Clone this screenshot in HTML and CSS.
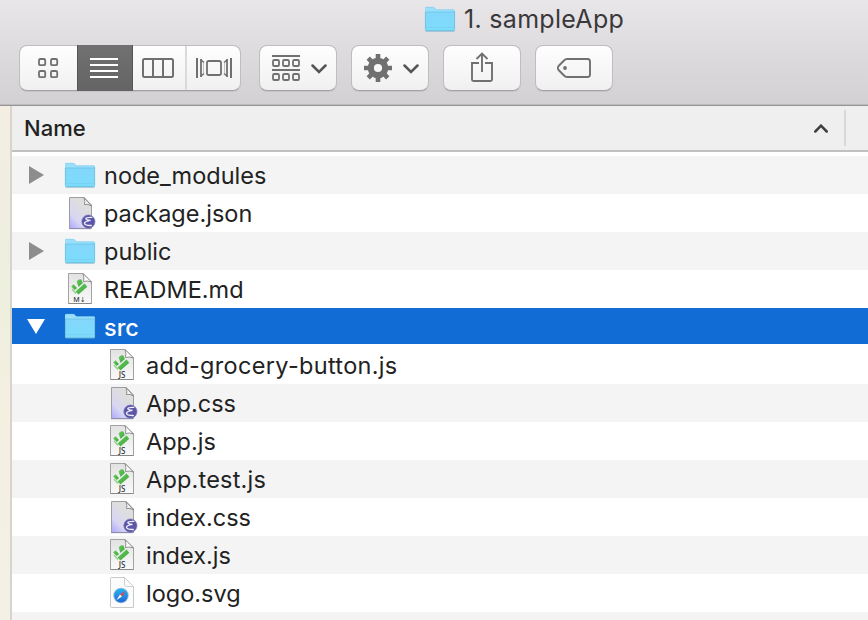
FILE: index.html
```html
<!DOCTYPE html>
<html lang="en">
<head>
<meta charset="utf-8">
<title>1. sampleApp</title>
<link rel="stylesheet" href="styles.css">
</head>
<body>
<svg class="defs" width="0" height="0" aria-hidden="true">
  <defs>
    <linearGradient id="gFolder" x1="0" y1="0" x2="0" y2="1"><stop offset="0" stop-color="#83d7fa"/><stop offset="1" stop-color="#7ddcfb"/></linearGradient>
    <linearGradient id="gPage" x1="0" y1="0" x2="0" y2="1"><stop offset="0" stop-color="#e2e2e2"/><stop offset="1" stop-color="#fafafa"/></linearGradient>
    <linearGradient id="gLilac" x1="0" y1="1" x2=".55" y2=".25"><stop offset="0" stop-color="#aaa6ff"/><stop offset=".45" stop-color="#d8d6f2"/><stop offset="1" stop-color="#dedede"/></linearGradient>
    <linearGradient id="gGreen" x1="0" y1="0" x2="1" y2="1"><stop offset="0" stop-color="#6cc866"/><stop offset="1" stop-color="#37a832"/></linearGradient>
    <linearGradient id="gBlue" x1="0" y1="0" x2="0" y2="1"><stop offset="0" stop-color="#24b5f5"/><stop offset="1" stop-color="#2168d4"/></linearGradient>
  </defs>
  <symbol id="folder" viewBox="0 0 32 28">
    <path d="M1 25V3.2Q1 2 2.2 2H9.3Q10.2 2 10.8 2.8L12.2 4.5H29.8Q31 4.5 31 5.7V25Z" fill="#9adffb"/>
    <path d="M1 7H31V24.5Q31 26 29.800 26H2.200Q1 26 1 24.500Z" fill="url(#gFolder)"/>
    <path d="M1 7H31" stroke="#6dc4e6" stroke-width=".8"/>
    <path d="M1.500 22.500H30.500" stroke="#74cdec" stroke-width=".6"/>
    <path d="M1.400 7V24.500M30.600 6V24.500" stroke="#68bde0" stroke-width=".7"/>
    <path d="M1.500 3.200Q1.500 2.300 2.300 2.300H9.300Q10 2.300 10.600 3.100L12 4.800H30" fill="none" stroke="#80cceb" stroke-width=".6"/>
    <path d="M1.500 26H30.500" stroke="#66acc8" stroke-width="1"/>
  </symbol>
  <symbol id="emacs" viewBox="0 0 32 34">
    <path d="M5.500 1.500H20L27.500 9V32.500H5.500Z" fill="url(#gLilac)" stroke="#9d9da2"/>
    <path d="M20 1.500Q21.500 6 20.500 8.500Q24 7.500 27.500 10Z" fill="#f7f7f7" stroke="#777" stroke-width=".8"/>
    <path d="M5 32.700H27" stroke="#8985a9" stroke-width=".8"/>
    <circle cx="24.400" cy="25.600" r="6.600" fill="#5b56a9" stroke="#7976b5" stroke-width=".7"/>
    <path d="M27.800 21.300Q22 21.100 21.800 22.700Q22 24 26.500 24.300Q20.300 25.400 20.500 27.300Q21 29.600 27.300 29.500" fill="none" stroke="#f0effa" stroke-width="1.300" stroke-linecap="round"/>
  </symbol>
  <symbol id="page" viewBox="0 0 32 34">
    <path d="M4.500 1.500H19L27.500 10V31.500H4.500Z" fill="url(#gPage)" stroke="#a2a2a2"/>
    <path d="M19 1.500Q20.500 6 19.500 9.500Q23 8.300 27.500 10Z" fill="#fff" stroke="#777" stroke-width=".8"/>
    <path d="M4.500 31.500H27.500" stroke="#888"/>
    <g fill="url(#gGreen)"><path d="M7.200 14.500L9.500 12.300L13 16L10.800 18Z"/><path d="M12.700 9.500Q14.500 6.500 17.400 7.500L18.800 11L14.500 15Z"/><path d="M11.500 19.500L20.500 11.500L23.300 14.800L14.500 22.500Z"/></g>
    <path d="M8 17L12 21.500" stroke="#8bd086" stroke-width="1.200"/>
  </symbol>
  <symbol id="safari" viewBox="0 0 32 34">
    <path d="M5.500 1.500H18.500L27.500 10.500V31.500H5.500Q4.500 31.500 4.500 30.500V2.500Q4.500 1.500 5.500 1.500Z" fill="#fcfcfc" stroke="#c9c9c9"/>
    <path d="M18.500 1.500V8.500Q18.500 10.500 20.500 10.500H27.500Z" fill="#fff" stroke="#c4c4c4" stroke-width=".8"/>
    <circle cx="15" cy="19.500" r="7.800" fill="#a9c5d8"/><circle cx="15" cy="19.500" r="6.900" fill="url(#gBlue)"/>
    <path d="M19.500 15L14 18.500L16 20.500Z" fill="#ee4036"/><path d="M10.500 24L14 18.500L16 20.500Z" fill="#fff"/>
  </symbol>
</svg>

<header class="toolbar">
  <div class="title"><svg class="folder-icon" width="32" height="28"><use href="#folder"/></svg><h1>1. sampleApp</h1></div>
  <div class="controls">
    <div class="segments">
      <button class="seg seg-icons" aria-label="Icons"><svg width="22" height="22" viewBox="0 0 22 22" fill="none" stroke="#707070" stroke-width="1.800"><rect x="2" y="2" width="6.200" height="6.200" rx="1.300"/><rect x="14" y="2" width="6.200" height="6.200" rx="1.300"/><rect x="2" y="14" width="6.200" height="6.200" rx="1.300"/><rect x="14" y="14" width="6.200" height="6.200" rx="1.300"/></svg></button>
      <button class="seg seg-list" aria-label="List"><svg width="28" height="20" viewBox="0 0 28 20" stroke="#fff" stroke-width="2"><path d="M0 1H28M0 7H28M0 13H28M0 19H28"/></svg></button>
      <button class="seg seg-columns" aria-label="Columns"><svg width="32" height="20" viewBox="0 0 32 20" fill="none" stroke="#707070" stroke-width="2"><rect x="1" y="1" width="30" height="18" rx="1.500"/><path d="M11 1V19M21 1V19"/></svg></button>
      <button class="seg seg-cover" aria-label="Cover Flow"><svg width="36" height="20" viewBox="0 0 36 20" fill="none" stroke="#707070" stroke-width="2"><path d="M1 0V20M35 0V20"/><path d="M5 1V19M31 1V19" stroke-width="1.800"/><path d="M4.500 1.500L8 4.500M4.500 18.500L8 15.500M31.500 1.500L28 4.500M31.500 18.500L28 15.500" stroke-width="1.500"/><path d="M7.500 5V15M28.500 5V15" stroke-width=".7" stroke="#aaa"/><rect x="11" y="3" width="14" height="14" rx="1.800" stroke-width="1.800"/></svg></button>
    </div>
    <button class="btn" aria-label="Arrange"><svg width="28" height="26" viewBox="0 0 28 26" fill="none" stroke="#707070" stroke-width="1.800"><path d="M0 1H28M0 15H28"/><rect x="1" y="5" width="6" height="6" rx="1.300"/><rect x="11" y="5" width="6" height="6" rx="1.300"/><rect x="21" y="5" width="6" height="6" rx="1.300"/><rect x="1" y="19" width="6" height="6" rx="1.300"/><rect x="11" y="19" width="6" height="6" rx="1.300"/><rect x="21" y="19" width="6" height="6" rx="1.300"/></svg><svg class="chev" width="16" height="10" viewBox="0 0 16 10"><path d="M1.500 1.500L8 8L14.500 1.500" fill="none" stroke="#555" stroke-width="2.500" stroke-linecap="round"/></svg></button>
    <button class="btn" aria-label="Action"><svg width="28" height="28" viewBox="0 0 28 28"><circle cx="14" cy="14" r="7.200" fill="none" stroke="#707070" stroke-width="6.200"/><g stroke="#707070" stroke-width="4.600"><path d="M14 0V6M14 22V28M0 14H6M22 14H28M4.200 4.200L8.500 8.500M19.500 19.500L23.800 23.800M4.200 23.800L8.500 19.500M19.500 8.500L23.800 4.200"/></g></svg><svg class="chev" width="16" height="10" viewBox="0 0 16 10"><path d="M1.500 1.500L8 8L14.500 1.500" fill="none" stroke="#555" stroke-width="2.500" stroke-linecap="round"/></svg></button>
    <button class="btn btn-share" aria-label="Share"><svg width="22" height="30" viewBox="0 0 22 30" fill="none" stroke="#707070" stroke-width="1.900"><path d="M8 11H1V27.500Q1 29 2.500 29H19.500Q21 29 21 27.500V11H14M11 20V1.500M5.500 7L11 1.500L16.500 7"/></svg></button>
    <button class="btn btn-tag" aria-label="Tags"><svg width="34" height="20" viewBox="0 0 34 20"><path d="M10 1H30.500Q33 1 33 3.500V16.500Q33 19 30.500 19H10Q8.500 19 7 17.500L1.600 12Q0 10 1.600 8L7 2.500Q8.500 1 10 1Z" fill="none" stroke="#707070" stroke-width="1.900"/><circle cx="8" cy="10" r="1.900" fill="#707070"/></svg></button>
  </div>
</header>

<main class="content">
  <div class="edge"></div>
  <section class="list">
    <div class="columns"><span class="name">Name</span><svg class="sort" width="14" height="9" viewBox="0 0 14 9"><path d="M1.300 7.500L7 1.700L12.700 7.500" fill="none" stroke="#3f3f3f" stroke-width="2.500" stroke-linecap="round"/></svg><span class="divider"></span></div>
    <ul>
      <li class="row"><svg class="tri" width="16" height="18"><path d="M1 0L16 9L1 18Z" fill="#8d8d8d"/></svg><svg class="folder-icon" width="32" height="28"><use href="#folder"/></svg><span>node_modules</span></li>
      <li class="row file"><svg class="doc" width="32" height="34"><use href="#emacs"/></svg><span>package.json</span></li>
      <li class="row"><svg class="tri" width="16" height="18"><path d="M1 0L16 9L1 18Z" fill="#8d8d8d"/></svg><svg class="folder-icon" width="32" height="28"><use href="#folder"/></svg><span>public</span></li>
      <li class="row file"><svg class="doc" width="32" height="34"><use href="#page"/><text x="15.500" y="29.500" class="kind">M↓</text></svg><span>README.md</span></li>
      <li class="row selected"><svg class="tri" width="18" height="16"><path d="M0 1H18L9 16Z" fill="#fff"/></svg><svg class="folder-icon" width="32" height="28"><use href="#folder"/></svg><span>src</span></li>
      <li class="row file child"><svg class="doc" width="32" height="34"><use href="#page"/><text x="16" y="29.500" class="kind js">JS</text></svg><span class="long">add-grocery-button.js</span></li>
      <li class="row file child"><svg class="doc" width="32" height="34"><use href="#emacs"/></svg><span>App.css</span></li>
      <li class="row file child"><svg class="doc" width="32" height="34"><use href="#page"/><text x="16" y="29.500" class="kind js">JS</text></svg><span>App.js</span></li>
      <li class="row file child"><svg class="doc" width="32" height="34"><use href="#page"/><text x="16" y="29.500" class="kind js">JS</text></svg><span class="mid">App.test.js</span></li>
      <li class="row file child"><svg class="doc" width="32" height="34"><use href="#emacs"/></svg><span>index.css</span></li>
      <li class="row file child"><svg class="doc" width="32" height="34"><use href="#page"/><text x="16" y="29.500" class="kind js">JS</text></svg><span>index.js</span></li>
      <li class="row file child"><svg class="doc" width="32" height="34"><use href="#safari"/></svg><span>logo.svg</span></li>
      <li class="row"></li>
    </ul>
  </section>
</main>
</body>
</html>
```
FILE: styles.css
```css
* { box-sizing: border-box; }
body {
  margin: 0;
  width: 868px;
  height: 620px;
  overflow: hidden;
  background: #fff;
  color: #222;
  font-family: Inter, "Liberation Sans", sans-serif;
  font-size: 23.5px;
}
svg { display: block; flex: none; }
.defs { position: absolute; }
.toolbar {
  height: 106px;
  background: linear-gradient(#e9e6e9, #d2d0d2);
  border-bottom: 1px solid #969496;
  box-shadow: inset 0 -1px #bcbabc;
}
.title { display: flex; align-items: center; height: 38px; padding-left: 424px; }
.title svg { margin-top: -1px; }
h1 { margin: 0 0 0 8px; font-size: 25px; font-weight: 400; color: #3a383a; white-space: nowrap; letter-spacing: .3px; }
.controls { display: flex; gap: 14px; padding: 7px 0 0 19px; }
button { margin: 0; padding: 0; display: flex; align-items: center; border: 0; background: none; }
.segments, .btn {
  height: 46px;
  border: 1px solid #bfbdbf;
  border-bottom-color: #a3a1a3;
  border-radius: 8px;
  background: linear-gradient(#fefefe, #f0f0f0);
  box-shadow: 0 1px #c6c4c6;
}
.segments { display: flex; width: 222px; margin-right: 4px; }
.seg { height: 44px; justify-content: center; }
.seg-icons { width: 57px; padding-right: 1px; }
.seg-list { width: 56px; height: 46px; margin-top: -1px; padding-right: 2px; background: linear-gradient(#717171, #646464); border: 1px solid #555; border-width: 0 1px; }
.seg-columns { width: 54px; padding-right: 2px; border-right: 2px solid #dadada; }
.seg-cover { width: 53px; }
.btn { width: 78px; padding-left: 12px; }
.chev { margin-left: 11px; margin-top: 1px; }
.btn-share, .btn-tag { padding: 0; justify-content: center; }
.btn-share svg { margin-top: -2px; }
.content { display: flex; height: 514px; }
.edge { width: 12px; border-right: 2px solid #d7d4ca; background: linear-gradient(#f4eee3, #edefdf 35%, #f5efe2 60%, #f3f0e5); }
.list { flex: 1; }
.columns { display: flex; align-items: center; height: 46px; padding: 0 22px 0 12px; background: #efefef; border-bottom: 2px solid #c0c0c0; }
.name { flex: 1; font-size: 22px; font-weight: 500; }
.sort { margin-right: 16px; }
.divider { width: 2px; height: 36px; background: #d7d7d7; }
ul { list-style: none; margin: 0; padding: 4px 0 0; }
.row { display: flex; align-items: center; height: 38px; padding-left: 16px; white-space: nowrap; }
.row:nth-child(odd) { background: #f4f4f4; }
.row > span { margin-left: 8px; padding-top: 1px; line-height: 37px; }
.row > .long { letter-spacing: .32px; }
.row > .mid { letter-spacing: .2px; }
.row .folder-icon { margin-left: 20px; }
.file { padding-left: 52px; }
.file.child { padding-left: 94px; }
.row:nth-child(even) { background: #fff; }
.row.selected { height: 36px; margin-bottom: 2px; padding-left: 15px; background: #116cd6; color: #fff; font-weight: 500; }
.selected > span { padding-top: 2px; }
.selected .folder-icon { margin-left: 19px; }
.kind { font: 500 7px "Noto Sans", "DejaVu Sans", sans-serif; fill: #333; text-anchor: middle; }
.js { font-size: 8px; }
```
